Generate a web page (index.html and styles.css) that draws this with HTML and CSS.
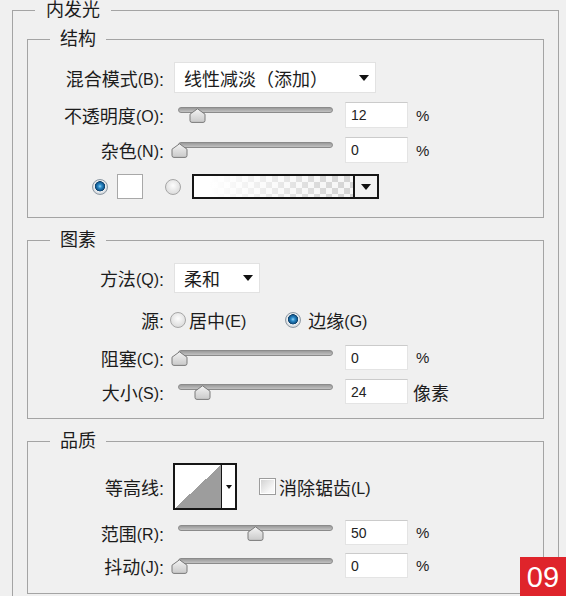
FILE: index.html
```html
<!DOCTYPE html>
<html lang="zh-CN">
<head>
    <meta charset="UTF-8">
    <meta name="viewport" content="width=device-width, initial-scale=1.0">
    <title>内发光</title>
    <link rel="stylesheet" href="styles.css">
</head>
<body>
    <fieldset class="group outer">
        <legend>内发光</legend>

        <!-- 结构 -->
        <fieldset class="group inner structure">
            <legend>结构</legend>
            <div class="row row-mode">
                <label class="lbl">混合模式<span class="key">(B)</span>:</label>
                <div class="select select-mode"><span>线性减淡（添加）</span><i class="arrow"></i></div>
            </div>
            <div class="row row-opacity">
                <label class="lbl">不透明度<span class="key">(O)</span>:</label>
                <div class="slider">
                    <div class="track"></div>
                    <svg class="thumb" style="left:18px" width="17" height="15" viewBox="0 0 17 15">
                        <defs>
                            <linearGradient id="thumbFill" x1="0" y1="0" x2="0" y2="1">
                                <stop offset="0" stop-color="#f4f4f4"/>
                                <stop offset="1" stop-color="#c9c9c9"/>
                            </linearGradient>
                        </defs>
                        <path d="M8.5 0.8 L16 6.2 V12.5 Q16 14.4 14 14.4 H3 Q1 14.4 1 12.5 V6.2 Z"/>
                    </svg>
                </div>
                <div class="num">12</div><span class="unit">%</span>
            </div>
            <div class="row row-noise">
                <label class="lbl">杂色<span class="key">(N)</span>:</label>
                <div class="slider">
                    <div class="track"></div>
                    <svg class="thumb" style="left:0px" width="17" height="15" viewBox="0 0 17 15"><path d="M8.5 0.8 L16 6.2 V12.5 Q16 14.4 14 14.4 H3 Q1 14.4 1 12.5 V6.2 Z"/></svg>
                </div>
                <div class="num">0</div><span class="unit">%</span>
            </div>
            <div class="row row-colors">
                <span class="radio checked"></span>
                <span class="swatch"></span>
                <span class="radio radio-gap"></span>
                <div class="gradient-pick">
                    <div class="gradient-preview"></div>
                    <div class="gradient-drop"><i class="arrow"></i></div>
                </div>
            </div>
        </fieldset>

        <!-- 图素 -->
        <fieldset class="group inner elements">
            <legend>图素</legend>
            <div class="row row-method">
                <label class="lbl">方法<span class="key">(Q)</span>:</label>
                <div class="select select-method"><span>柔和</span><i class="arrow"></i></div>
            </div>
            <div class="row row-source">
                <label class="lbl">源:</label>
                <span class="radio source-radio"></span>
                <span class="opt">居中<span class="key">(E)</span></span>
                <span class="radio checked edge-radio"></span>
                <span class="opt">边缘<span class="key">(G)</span></span>
            </div>
            <div class="row row-choke">
                <label class="lbl">阻塞<span class="key">(C)</span>:</label>
                <div class="slider">
                    <div class="track"></div>
                    <svg class="thumb" style="left:0px" width="17" height="15" viewBox="0 0 17 15"><path d="M8.5 0.8 L16 6.2 V12.5 Q16 14.4 14 14.4 H3 Q1 14.4 1 12.5 V6.2 Z"/></svg>
                </div>
                <div class="num">0</div><span class="unit">%</span>
            </div>
            <div class="row row-size">
                <label class="lbl">大小<span class="key">(S)</span>:</label>
                <div class="slider">
                    <div class="track"></div>
                    <svg class="thumb" style="left:23px" width="17" height="15" viewBox="0 0 17 15"><path d="M8.5 0.8 L16 6.2 V12.5 Q16 14.4 14 14.4 H3 Q1 14.4 1 12.5 V6.2 Z"/></svg>
                </div>
                <div class="num">24</div><span class="unit unit-px">像素</span>
            </div>
        </fieldset>

        <!-- 品质 -->
        <fieldset class="group inner quality">
            <legend>品质</legend>
            <div class="row row-contour">
                <label class="lbl">等高线:</label>
                <div class="contour">
                    <div class="contour-preview"></div>
                    <div class="contour-drop"><i class="arrow small"></i></div>
                </div>
                <span class="checkbox"></span>
                <span class="opt">消除锯齿<span class="key">(L)</span></span>
            </div>
            <div class="row row-range">
                <label class="lbl">范围<span class="key">(R)</span>:</label>
                <div class="slider">
                    <div class="track"></div>
                    <svg class="thumb" style="left:76px" width="17" height="15" viewBox="0 0 17 15"><path d="M8.5 0.8 L16 6.2 V12.5 Q16 14.4 14 14.4 H3 Q1 14.4 1 12.5 V6.2 Z"/></svg>
                </div>
                <div class="num">50</div><span class="unit">%</span>
            </div>
            <div class="row row-jitter">
                <label class="lbl">抖动<span class="key">(J)</span>:</label>
                <div class="slider">
                    <div class="track"></div>
                    <svg class="thumb" style="left:0px" width="17" height="15" viewBox="0 0 17 15"><path d="M8.5 0.8 L16 6.2 V12.5 Q16 14.4 14 14.4 H3 Q1 14.4 1 12.5 V6.2 Z"/></svg>
                </div>
                <div class="num">0</div><span class="unit">%</span>
            </div>
        </fieldset>
    </fieldset>

    <div class="badge">09</div>
</body>
</html>
```

FILE: styles.css
```css
* {
    box-sizing: border-box;
}
html, body {
    margin: 0;
    overflow: hidden;
}
body {
    width: 566px;
    height: 596px;
    background-color: #f0f0f0;
    font-family: "Liberation Sans", "Noto Sans CJK SC", sans-serif;
    font-size: 18px;
    color: #1c1c1c;
}

/* 分组框 */
.group {
    border: 1px solid #a4a4a4;
    margin: 0;
    padding: 0;
    min-width: 0;
}
.group legend {
    padding: 0 10px;
    margin-left: 22px;
    line-height: 22px;
    font-size: 18px;
}
.outer {
    margin-left: 12px;
    width: 547px;
    padding: 0 14px 20px 14px;
}
.outer > legend {
    line-height: 20px;
    padding: 0 11px;
    margin-left: 8px;
}
.structure {
    margin-top: 8px;
    padding: 12px 0 18px 0;
}
.elements {
    margin-top: 11px;
    padding: 12px 0 14px 0;
}
.quality {
    margin-top: 11px;
    padding: 11px 0 15px 0;
}

/* 行 */
.row {
    display: flex;
    align-items: center;
}
.lbl {
    width: 136px;
    flex-shrink: 0;
    text-align: right;
    white-space: nowrap;
}
.key {
    font-size: 16px;
    vertical-align: 1px;
}
.row-mode { height: 31px; }
.row-opacity { height: 26px; margin-top: 9px; }
.row-noise { height: 26px; margin-top: 9px; }
.row-colors { height: 25px; margin-top: 11px; padding-left: 64px; }
.row-method { height: 30px; }
.row-source { height: 22px; margin-top: 16px; }
.row-choke { height: 25px; margin-top: 14px; }
.row-size { height: 25px; margin-top: 9px; }
.row-contour { height: 47px; }
.row-range { height: 25px; margin-top: 10px; }
.row-jitter { height: 25px; margin-top: 8px; }

/* 下拉框 */
.select {
    height: 100%;
    margin-left: 10px;
    display: flex;
    align-items: center;
    justify-content: space-between;
    padding: 0 6px 0 9px;
    background-color: #fff;
    border: 1px solid #e2e2e2;
}
.select-mode { width: 202px; }
.select-method { width: 86px; }
.arrow {
    width: 0;
    height: 0;
    border-left: 5px solid transparent;
    border-right: 5px solid transparent;
    border-top: 6px solid #111;
}
.arrow.small {
    border-left-width: 3px;
    border-right-width: 3px;
    border-top-width: 4px;
}

/* 滑块 */
.slider {
    position: relative;
    width: 163px;
    height: 16px;
    margin-left: 7px;
    flex-shrink: 0;
}
.track {
    margin-left: 7px;
    margin-right: 1px;
    height: 6px;
    border-radius: 3px;
    border: 1px solid #8b8b8b;
    background: linear-gradient(#9a9a9a, #c2c2c2);
}
.thumb {
    position: absolute;
    top: 1px;
}
.thumb path {
    fill: url(#thumbFill);
    stroke: #7a7a7a;
    stroke-width: 1;
}

/* 数值输入框 */
.num {
    width: 63px;
    height: 100%;
    margin-left: 11px;
    padding-left: 5px;
    display: flex;
    align-items: center;
    font-size: 14px;
    color: #222;
    background-color: #fff;
    border: 1px solid #e4e4e4;
    border-top-color: #cbcbcb;
}
.unit {
    margin-left: 8px;
    font-size: 15px;
}
.unit-px {
    margin-left: 5px;
    font-size: 18px;
}

/* 单选钮 */
.radio {
    width: 16px;
    height: 16px;
    flex-shrink: 0;
    border-radius: 50%;
    border: 1px solid #a6a6a6;
    background: radial-gradient(circle at 50% 40%, #fdfdfd, #d2d2d2);
}
.radio.checked {
    border-color: #8f9aa4;
    background: radial-gradient(circle at 50% 45%, #9ad8f7 0, #2e8fcd 1.8px, #11558b 4.2px, #0b3e66 4.8px, #eef0f2 5.4px, #d0d5da 7.5px);
}
.radio-gap {
    margin-left: 22px;
}
.source-radio {
    margin-left: 6px;
}
.edge-radio {
    margin-left: 39px;
}
.opt {
    margin-left: 3px;
    white-space: nowrap;
}
.edge-radio + .opt {
    margin-left: 7px;
}

/* 颜色 */
.swatch {
    width: 26px;
    height: 25px;
    margin-left: 9px;
    background-color: #fff;
    border: 1px solid #a8a8a8;
}
.gradient-pick {
    display: flex;
    width: 187px;
    height: 25px;
    margin-left: 11px;
    border: 2px solid #161616;
}
.gradient-preview {
    width: 159px;
    height: 100%;
    background:
        linear-gradient(to right, #fff 10%, rgba(255, 255, 255, 0.3) 80%, rgba(255, 255, 255, 0.2)),
        conic-gradient(#cacaca 25%, #f4f4f4 0 50%, #cacaca 0 75%, #f4f4f4 0);
    background-size: auto, 12px 12px;
}
.gradient-drop {
    flex: 1;
    display: flex;
    align-items: center;
    justify-content: center;
    border-left: 2px solid #161616;
    background-color: #f2f2f2;
}

/* 等高线 */
.contour {
    display: flex;
    width: 64px;
    height: 47px;
    margin-left: 9px;
    border: 2px solid #161616;
}
.contour-preview {
    width: 46px;
    height: 100%;
    background: linear-gradient(to top left, #9d9d9d 50%, #fff 50%);
}
.contour-drop {
    flex: 1;
    display: flex;
    align-items: center;
    justify-content: center;
    border-left: 1px solid #161616;
    background-color: #fff;
}
.checkbox {
    width: 17px;
    height: 17px;
    margin-left: 22px;
    border: 1px solid #9c9c9c;
    background: linear-gradient(135deg, #cfcfcf, #f7f7f7 70%);
    box-shadow: inset 0 0 0 1px #fff;
}

/* 角标 */
.badge {
    position: fixed;
    right: 0;
    bottom: 0;
    width: 46px;
    height: 39px;
    background-color: #df242b;
    color: #fff;
    font-family: "Liberation Sans Narrow", "Liberation Sans", sans-serif;
    font-size: 29px;
    line-height: 40px;
    text-align: center;
}
```
